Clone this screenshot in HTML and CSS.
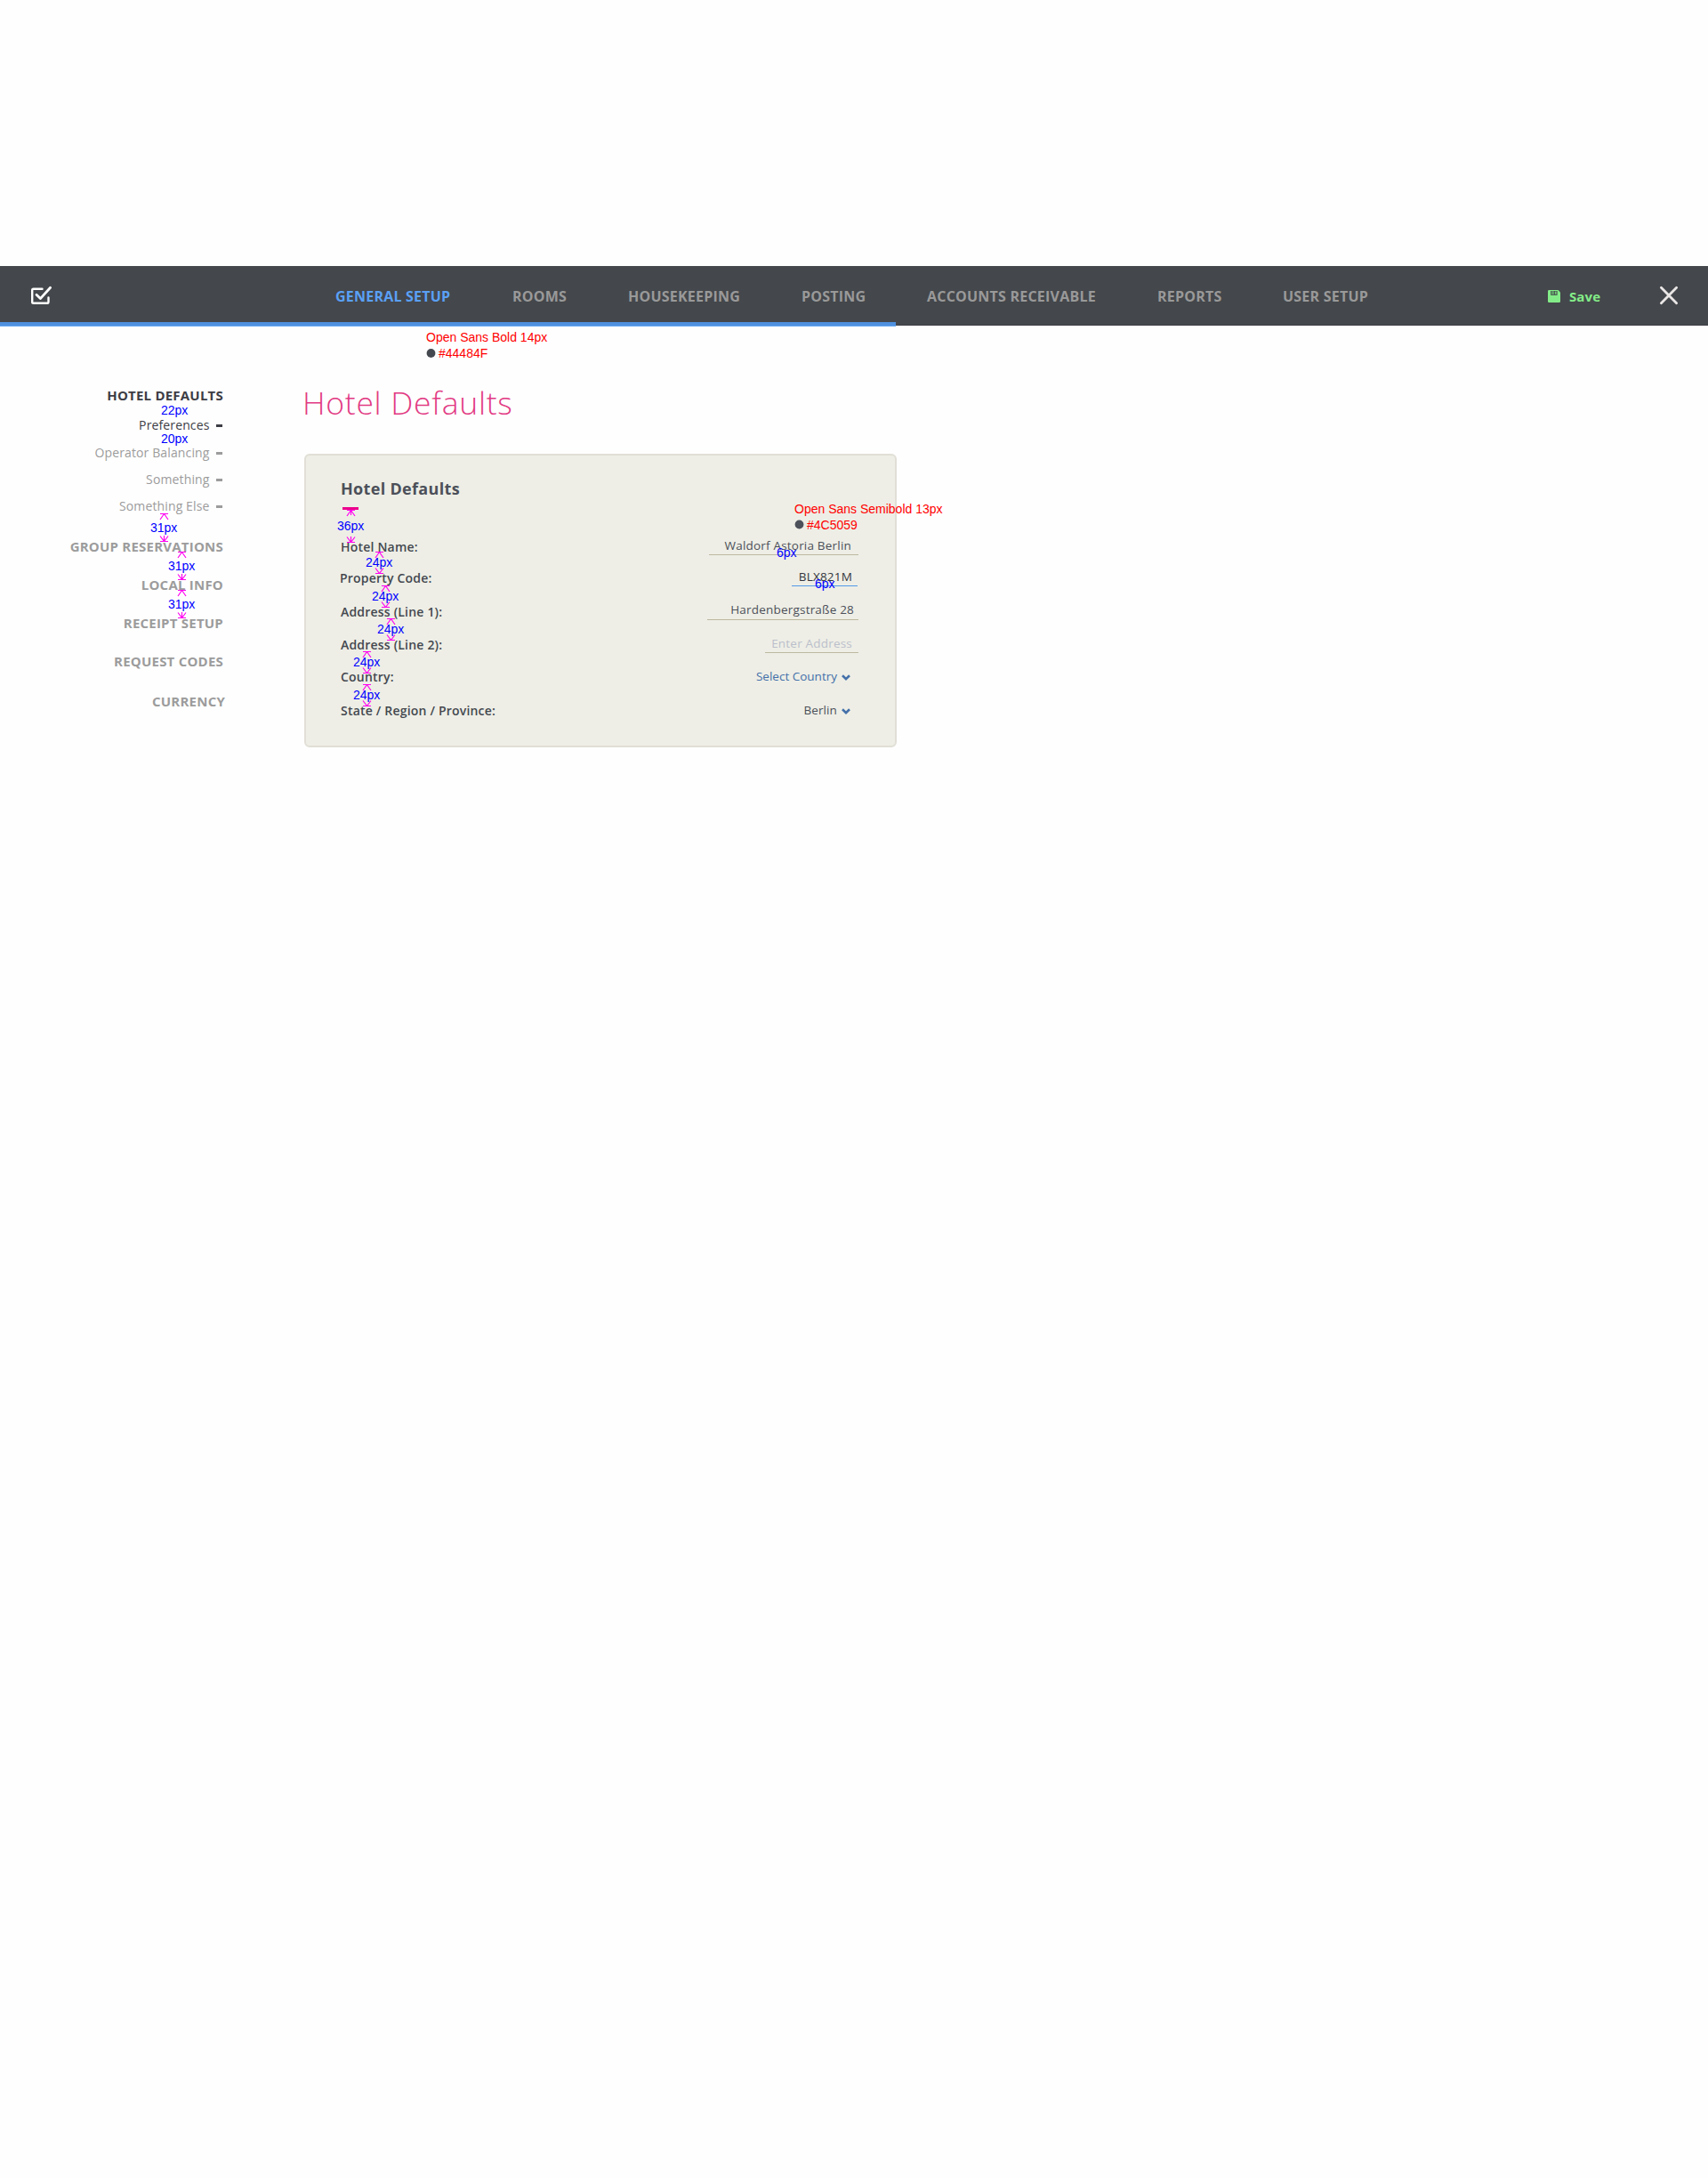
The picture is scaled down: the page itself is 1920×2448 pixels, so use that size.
FILE: index.html
```
<!DOCTYPE html>
<html lang="en">
<head>
<meta charset="utf-8">
<title>Hotel Defaults</title>
<link rel="stylesheet" href="styles.css">
</head>
<body>
<header class="topbar">
  <svg class="logo" width="26" height="24" viewBox="0 0 26 24" fill="none" stroke="#fff" stroke-width="2.4" stroke-linecap="round" stroke-linejoin="round"><path d="M14.5 4.7H4.5Q3.2 4.7 3.2 6V19.5Q3.2 20.8 4.5 20.8H20.3Q21.5 20.8 21.5 19.5V14.5"/><path d="M8 11.3L12.4 15.6L23.6 3.2" stroke-width="2.8"/></svg>
  <nav class="tabs">
    <a class="tab tab-active">GENERAL SETUP</a>
    <a class="tab">ROOMS</a>
    <a class="tab">HOUSEKEEPING</a>
    <a class="tab">POSTING</a>
    <a class="tab">ACCOUNTS RECEIVABLE</a>
    <a class="tab">REPORTS</a>
    <a class="tab">USER SETUP</a>
  </nav>
  <a class="save">
    <svg width="14" height="14" viewBox="0 0 14 14"><path d="M1.3 0H11.5L14 2.5V12.7Q14 14 12.7 14H1.3Q0 14 0 12.7V1.3Q0 0 1.3 0Z" fill="#83ec88"/><path d="M3.2 1H10.6V5.8H3.2Z" fill="#44474b"/><path d="M4 1.2H7.2V5H4Z" fill="#5f9c68"/><path d="M8.2 1.6H9.5V4.7H8.2Z" fill="#83ec88"/></svg>
    <span>Save</span>
  </a>
  <svg class="close" width="22" height="22" viewBox="0 0 22 22" stroke="#e9e6e5" stroke-width="2.8" stroke-linecap="round"><path d="M2.4 2.2L19.6 19.8M19.6 2.2L2.4 19.8"/></svg>
</header>

<div class="page">
  <aside class="side">
    <h2 class="group group-active">HOTEL DEFAULTS</h2>
    <a class="item item-active">Preferences</a>
    <a class="item">Operator Balancing</a>
    <a class="item">Something</a>
    <a class="item">Something Else</a>
    <h2 class="group group-first">GROUP RESERVATIONS</h2>
    <h2 class="group">LOCAL INFO</h2>
    <h2 class="group">RECEIPT SETUP</h2>
    <h2 class="group">REQUEST CODES</h2>
    <h2 class="group group-last">CURRENCY</h2>
  </aside>
  <main class="main">
    <h1 class="title">Hotel Defaults</h1>
    <section class="card">
      <h3 class="card-title">Hotel Defaults</h3>
      <div class="rule"></div>
      <div class="rows">
        <div class="row"><label class="label">Hotel Name:</label><span class="value name">Waldorf Astoria Berlin</span></div>
        <div class="row"><label class="label code-label">Property Code:</label><span class="value code">BLX821M</span></div>
        <div class="row"><label class="label address-label">Address (Line 1):</label><span class="value street">Hardenbergstraße 28</span></div>
        <div class="row"><label class="label">Address (Line 2):</label><span class="value empty">Enter Address</span></div>
        <div class="row"><label class="label country-label">Country:</label><span class="select link">Select Country<svg class="chevron" width="10" height="7" viewBox="0 0 10 7"><path d="M1 1.2L5 5.1L9 1.2"/></svg></span></div>
        <div class="row"><label class="label country-label">State / Region / Province:</label><span class="select">Berlin<svg class="chevron" width="10" height="7" viewBox="0 0 10 7"><path d="M1 1.2L5 5.1L9 1.2"/></svg></span></div>
      </div>
    </section>
  </main>
</div>

<!-- Spacing and type notes laid over the screen -->
<div class="notes">
  <svg class="marks" width="1100" height="820" viewBox="0 0 1100 820" fill="none" stroke="#ff00f0" stroke-width="1.2">
    <defs>
      <path id="up" d="M-4.5 .5H4.5M0 .5L-4.5 7M0 .5L4.5 7"/>
      <path id="down" d="M-4.5 -.5H4.5M0 -.5L-4.5 -6.5M0 -.5L4.5 -6.5"/>
      <path id="star" d="M-4.5 -.5H4.5M0 -.5L-4.5 -6.5M0 -.5L4.5 -6.5M0 -.5V-7"/>
    </defs>
    <use href="#up" x="184.5" y="577"/><use href="#star" x="184.5" y="609"/>
    <use href="#up" x="204.5" y="620"/><use href="#star" x="204.5" y="652"/>
    <use href="#up" x="204.5" y="663"/><use href="#star" x="204.5" y="695"/>
    <use href="#up" x="394.5" y="573"/><path d="M394.5 573V579"/><use href="#star" x="394.5" y="610"/>
    <use href="#up" x="426.5" y="620"/><use href="#down" x="426.5" y="645"/>
    <use href="#up" x="433.5" y="658"/><use href="#down" x="433.5" y="683"/>
    <use href="#up" x="439.5" y="695"/><use href="#down" x="439.5" y="720"/>
    <use href="#up" x="412.5" y="732"/><use href="#down" x="412.5" y="757"/>
    <use href="#up" x="412.5" y="769"/><use href="#down" x="412.5" y="794"/>
    <g stroke="none"><circle cx="484.5" cy="397" r="4.9" fill="#44484f"/><circle cx="898.5" cy="589.5" r="4.9" fill="#4c5059"/></g>
  </svg>
  <span class="note n1">22px</span>
  <span class="note n2">20px</span>
  <span class="note n3">31px</span>
  <span class="note n4">31px</span>
  <span class="note n5">31px</span>
  <span class="note n6">36px</span>
  <span class="note n7">24px</span>
  <span class="note n8">24px</span>
  <span class="note n9">24px</span>
  <span class="note n10">24px</span>
  <span class="note n11">24px</span>
  <span class="note n12">6px</span>
  <span class="note n13">6px</span>
  <span class="note type t1">Open Sans Bold 14px</span>
  <span class="note type t2">#44484F</span>
  <span class="note type t3">Open Sans Semibold 13px</span>
  <span class="note type t4">#4C5059</span>
</div>
</body>
</html>
```
FILE: styles.css
```
* { box-sizing: border-box; }
body {
  margin: 0;
  min-height: 2448px;
  padding-top: 299px;
  position: relative;
  background: #fefefe;
  color: #4c5059;
  font-family: "Open Sans", sans-serif;
}
h1, h2, h3 { margin: 0; }
svg { display: block; flex: none; }

/* Top bar */
.topbar {
  position: relative;
  display: flex;
  align-items: flex-start;
  height: 67px;
  padding: 24px 32px 0 33px;
  background: #44474b;
  border-bottom: 1px solid #3f4045;
}
.topbar::after {
  content: "";
  position: absolute;
  left: 0;
  bottom: -2px;
  width: 1007px;
  height: 4px;
  background: #4f90df;
  border-bottom: 1px solid #68a8f2;
}
.logo { margin: -3px 318px 0 0; }
.tabs {
  display: grid;
  grid-template-columns: 199px 130px 195px 141px 259px 141px 298px;
}
.tab {
  font-size: 16px;
  line-height: 20px;
  font-weight: 700;
  letter-spacing: .22px;
  color: #999;
  white-space: nowrap;
}
.tab-active { color: #5aa0f5; }
.save {
  display: flex;
  gap: 10px;
  width: 125px;
  color: #83ec88;
  font-size: 15px;
  line-height: 20px;
  font-weight: 700;
  letter-spacing: .1px;
}
.save svg { margin-top: 3px; }
.close { margin-top: -2px; }

/* Columns */
.page {
  display: grid;
  grid-template-columns: 250px 666px;
  column-gap: 92px;
}
.side {
  display: flex;
  flex-direction: column;
  align-items: flex-end;
  padding-top: 68px;
}
.group {
  margin: 23px -1px 0 0;
  font-size: 15px;
  line-height: 20px;
  font-weight: 700;
  letter-spacing: .22px;
  color: #9c9c9c;
}
.group-active { margin-top: 0; color: #3d3d45; }
.group-first { margin-top: 26px; }
.group-last { margin-top: 25px; margin-right: -3px; }
.item {
  display: flex;
  align-items: center;
  gap: 7.5px;
  margin-top: 11px;
  font-size: 14px;
  line-height: 19px;
  letter-spacing: .13px;
  color: #9c9c9c;
}
.item::after {
  content: "";
  width: 7px;
  height: 3px;
  margin-top: 2px;
  background: #9c9c9c;
}
.item-active { margin-top: 14px; color: #3d3d45; }
.item-active::after { background: #3d3d45; }
.item-active + .item { margin-top: 12px; }

.main { padding-top: 63px; }
.title {
  margin-left: -2px;
  font-size: 35.5px;
  line-height: 47px;
  font-weight: 300;
  letter-spacing: .72px;
  color: #e23a83;
}

/* Card */
.card {
  height: 330px;
  margin-top: 34px;
  padding: 25px 41px 0 39px;
  background: #eeeee6;
  border: 2px solid #e1dfd6;
  border-radius: 6px;
}
.card-title {
  font-size: 18px;
  line-height: 24px;
  font-weight: 700;
  letter-spacing: .32px;
}
.rule {
  width: 18px;
  height: 3px;
  margin: 9px 0 30px 2px;
  background: #ec008c;
}
.rows {
  display: grid;
  grid-template-rows: 35px 37px 38px 37px 38px 21px;
}
.row {
  display: flex;
  justify-content: space-between;
  align-items: flex-start;
  font-size: 13.5px;
  line-height: 20px;
}
.label {
  padding-top: 2px;
  font-size: 14px;
  line-height: 19px;
  font-weight: 600;
  letter-spacing: .2px;
  color: #44484f;
}
.code-label { margin-left: -1px; }
.address-label { padding-top: 3px; }
.country-label { padding-top: 1px; }
.value {
  padding-right: 8px;
  text-align: right;
  letter-spacing: .2px;
  border-bottom: 1px solid #bcb9a0;
}
.name { width: 168px; }
.code { width: 74px; margin-right: 1px; padding-right: 6px; color: #33363d; border-color: #5299e8; }
.street { width: 170px; padding: 0 5px 1px 0; }
.empty { width: 105px; padding-right: 7px; color: #bbbfcb; }
.select {
  display: flex;
  align-items: center;
  gap: 5px;
  padding-right: 9px;
  letter-spacing: .1px;
}
.link { color: #4470a9; letter-spacing: 0; }
.chevron {
  margin-top: 3px;
  fill: none;
  stroke: #4470a9;
  stroke-width: 2.6;
}

/* Notes */
.notes { position: absolute; left: 0; top: 0; }
.marks { position: absolute; left: 0; top: 0; }
.note {
  position: absolute;
  font: 14px/16px "Liberation Sans", Arial, sans-serif;
  color: #00f;
  white-space: nowrap;
}
.type { color: #f00; }
.n1 { left: 181px; top: 453px; }
.n2 { left: 181px; top: 485px; }
.n3 { left: 169px; top: 585px; }
.n4 { left: 189px; top: 628px; }
.n5 { left: 189px; top: 671px; }
.n6 { left: 379px; top: 583px; }
.n7 { left: 411px; top: 624px; }
.n8 { left: 418px; top: 662px; }
.n9 { left: 424px; top: 699px; }
.n10 { left: 397px; top: 736px; }
.n11 { left: 397px; top: 773px; }
.n12 { left: 873px; top: 613px; }
.n13 { left: 916px; top: 648px; }
.t1 { left: 479px; top: 371px; }
.t2 { left: 493px; top: 389px; }
.t3 { left: 893px; top: 564px; }
.t4 { left: 907px; top: 582px; }
```
